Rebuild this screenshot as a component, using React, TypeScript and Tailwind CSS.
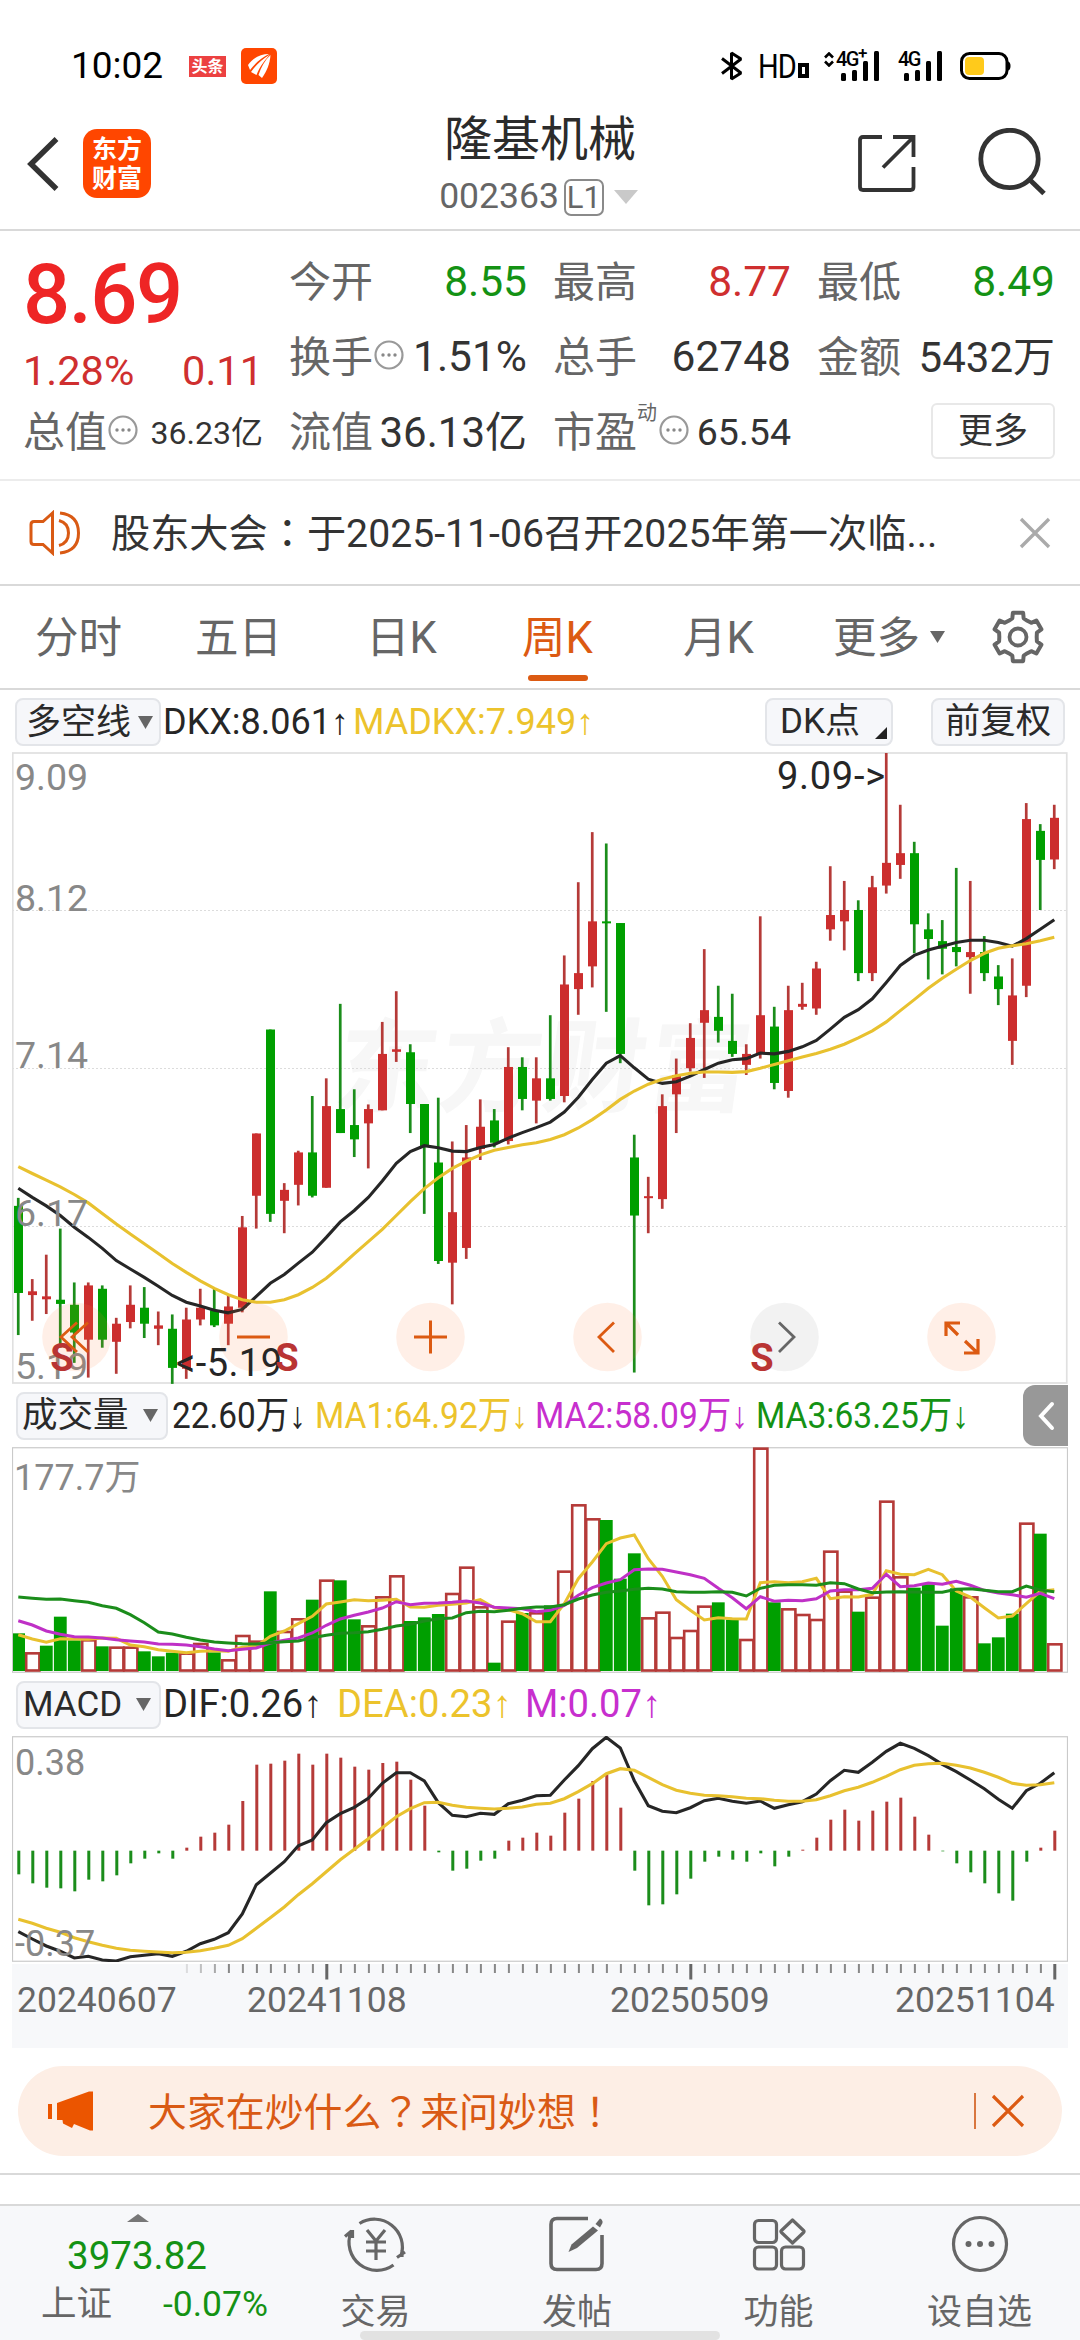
import React from "react";

/* ------------------------------------------------------------------ */
/* Chart data. Every series has 75 weekly points, 14px apart.          */
/* ------------------------------------------------------------------ */

const STEP = 14;
const cx = (i: number) => 6.3 + i * STEP;

// kind, high, bodyTop, bodyBottom, low
type Candle = [string, number, number, number, number];
const candles: Candle[] = [
  ["G", 1088, 1107, 1314, 1414], ["R", 1281, 1310, 1319, 1380], ["R", 1223, 1322, 1329, 1364],
  ["G", 1161, 1330, 1340, 1444], ["G", 1289, 1342, 1408, 1480], ["R", 1289, 1296, 1425, 1515],
  ["G", 1296, 1304, 1425, 1444], ["R", 1373, 1387, 1430, 1506], ["R", 1296, 1342, 1383, 1398],
  ["G", 1300, 1349, 1387, 1421], ["R", 1358, 1391, 1399, 1438], ["G", 1365, 1399, 1492, 1530],
  ["R", 1349, 1377, 1494, 1518], ["R", 1304, 1349, 1377, 1391], ["G", 1304, 1355, 1391, 1395],
  ["R", 1320, 1346, 1387, 1438], ["R", 1131, 1158, 1349, 1360], ["R", 935, 935, 1083, 1161],
  ["G", 688, 688, 1126, 1145], ["R", 1053, 1069, 1095, 1172], ["R", 976, 980, 1057, 1106],
  ["G", 846, 980, 1083, 1087], ["R", 804, 870, 1064, 1064], ["G", 627, 877, 934, 934],
  ["G", 830, 915, 949, 991], ["R", 866, 877, 911, 1018], ["R", 670, 746, 880, 880],
  ["R", 597, 735, 741, 765], ["G", 723, 742, 865, 934], ["G", 865, 865, 965, 1126],
  ["G", 850, 1004, 1238, 1245], ["R", 954, 1122, 1242, 1341], ["R", 915, 992, 1207, 1233],
  ["R", 854, 919, 972, 998], ["G", 877, 904, 957, 968], ["R", 730, 777, 953, 961],
  ["G", 754, 777, 853, 880], ["R", 754, 804, 857, 911], ["G", 654, 804, 853, 857],
  ["R", 512, 581, 846, 861], ["R", 338, 554, 592, 653], ["R", 219, 431, 538, 588],
  ["G", 246, 431, 434, 646], ["G", 435, 435, 746, 768], ["G", 938, 992, 1130, 1503],
  ["R", 1038, 1084, 1087, 1172], ["R", 842, 870, 1091, 1114], ["R", 757, 796, 842, 934],
  ["R", 673, 708, 780, 788], ["R", 497, 642, 672, 803], ["G", 584, 658, 691, 719],
  ["G", 603, 715, 746, 753], ["R", 723, 746, 772, 796], ["R", 419, 654, 745, 757],
  ["G", 634, 681, 815, 830], ["R", 584, 642, 834, 850], ["R", 577, 627, 634, 641],
  ["R", 527, 543, 638, 653], ["R", 300, 416, 450, 477], ["R", 335, 404, 431, 500],
  ["G", 381, 404, 554, 573], ["R", 323, 350, 554, 573], ["R", 31, 292, 346, 365],
  ["R", 154, 269, 297, 330], ["G", 242, 269, 438, 507], ["G", 412, 450, 473, 569],
  ["G", 428, 478, 496, 557], ["G", 304, 492, 504, 538], ["R", 335, 504, 516, 603],
  ["G", 466, 504, 554, 573], ["G", 535, 562, 592, 630], ["R", 519, 607, 715, 772],
  ["R", 150, 188, 584, 611], ["G", 200, 216, 285, 404], ["R", 154, 185, 284, 307],
];

const dkx = [
  1065, 1087, 1107, 1130, 1158, 1182, 1208, 1237, 1257, 1277, 1298, 1320, 1336, 1345, 1355, 1361, 1353, 1322, 1291,
  1270, 1243, 1217, 1182, 1145, 1118, 1087, 1048, 1006, 978, 964, 969, 977, 978, 968, 961, 946, 933, 921, 908, 884,
  849, 807, 768, 750, 779, 806, 816, 812, 799, 783, 768, 760, 757, 744, 746, 740, 729, 714, 687, 659, 641, 615, 576,
  536, 512, 499, 490, 481, 476, 476, 481, 490, 472, 450, 427,
];
const madkx = [
  1014, 1030, 1046, 1062, 1080, 1100, 1125, 1150, 1174, 1197, 1220, 1244, 1265, 1285, 1303, 1318, 1330, 1336, 1336,
  1330, 1318, 1301, 1279, 1251, 1221, 1192, 1163, 1130, 1097, 1066, 1040, 1018, 1001, 986, 975, 968, 962, 957, 949,
  938, 922, 902, 879, 854, 834, 818, 806, 798, 792, 789, 789, 790, 788, 780, 771, 762, 753, 745, 735, 723, 708, 691,
  670, 643, 617, 590, 566, 545, 524, 507, 495, 489, 484, 477, 469,
];

const volTops = [
  729, 786, 766, 679, 750, 747, 768, 769, 769, 783, 798, 787, 787, 758, 786, 807, 734, 751, 603, 722, 684, 628, 568,
  570, 687, 705, 618, 555, 692, 681, 671, 608, 529, 648, 817, 691, 668, 666, 645, 541, 342, 384, 389, 565, 489, 681,
  664, 740, 719, 646, 636, 688, 746, 172, 636, 654, 671, 686, 481, 601, 664, 619, 331, 558, 592, 582, 706, 594, 618,
  759, 741, 670, 397, 430, 759,
];
const volKinds = "GRGGGRGRRGGGRRGRRRGRRGRGGRRRGGGRRRGRGRGRRRGGGRRRRRGGRRGRRRRRGRRRGGGGRGGGRGR";
const ma1 = [
  733, 746, 756, 745, 746, 747, 743, 744, 764, 769, 778, 783, 787, 783, 781, 783, 771, 768, 738, 722, 700, 678, 641,
  635, 628, 631, 630, 627, 650, 651, 645, 642, 638, 628, 652, 658, 670, 694, 694, 640, 565, 515, 460, 443, 434, 505,
  558, 628, 660, 689, 682, 685, 686, 577, 574, 577, 574, 564, 625, 619, 620, 612, 541, 552, 553, 537, 553, 602, 620,
  652, 683, 677, 640, 603, 598,
];
const ma2 = [
  691, 704, 722, 732, 739, 740, 743, 748, 752, 755, 761, 762, 764, 769, 776, 781, 777, 773, 758, 750, 743, 728, 705,
  686, 675, 665, 653, 634, 643, 639, 638, 636, 632, 638, 651, 653, 655, 664, 660, 645, 615, 592, 578, 568, 538, 536,
  537, 545, 553, 564, 594, 622, 655, 619, 633, 630, 631, 625, 602, 598, 598, 594, 552, 589, 586, 578, 582, 573, 585,
  600, 608, 613, 621, 609, 625,
];
const ma3 = [
  620, 624, 627, 626, 631, 636, 646, 654, 673, 697, 725, 731, 741, 749, 755, 758, 760, 761, 757, 754, 752, 742, 735,
  729, 727, 724, 717, 707, 702, 692, 685, 683, 667, 663, 664, 660, 654, 650, 650, 643, 626, 614, 606, 602, 597, 594,
  596, 604, 606, 606, 604, 606, 617, 594, 585, 583, 583, 585, 577, 580, 596, 607, 605, 604, 605, 606, 606, 597, 595,
  600, 604, 604, 587, 599, 604,
];

const macdBars = [
  611, 638, 651, 653, 662, 627, 632, 614, 578, 564, 548, 564, 531, 498, 486, 462, 391, 282, 279, 270, 249, 282, 249,
  261, 288, 297, 277, 273, 327, 405, 545, 600, 594, 570, 564, 510, 501, 486, 495, 426, 384, 331, 312, 411, 600, 704,
  701, 671, 624, 573, 558, 567, 573, 548, 587, 558, 537, 501, 447, 417, 450, 420, 393, 381, 438, 492, 542, 578, 605,
  638, 668, 690, 573, 531, 480,
];
const dif = [
  783, 805, 826, 842, 862, 857, 868, 871, 858, 854, 849, 857, 842, 819, 806, 786, 730, 642, 608, 573, 525, 508, 456,
  429, 410, 383, 338, 306, 306, 331, 396, 434, 438, 428, 431, 399, 389, 375, 374, 328, 285, 234, 200, 232, 330, 405,
  422, 426, 411, 390, 383, 392, 398, 391, 413, 402, 393, 370, 330, 299, 305, 275, 242, 218, 233, 255, 281, 303, 328,
  354, 386, 413, 360, 338, 306,
];
const dea = [
  746, 758, 773, 785, 801, 813, 824, 833, 839, 842, 844, 846, 845, 840, 833, 824, 804, 773, 741, 709, 672, 639, 603,
  567, 536, 504, 471, 438, 414, 396, 395, 404, 410, 413, 415, 413, 409, 401, 398, 384, 363, 339, 309, 294, 299, 320,
  342, 359, 368, 374, 375, 378, 383, 384, 389, 392, 392, 387, 375, 360, 350, 335, 317, 297, 284, 279, 278, 284, 292,
  305, 320, 338, 344, 342, 336,
];

const yPrice = (v: number) => (v - 31) / 2.376 + 1;
const yVol = (v: number) => (v - 173) / 3 + 1;
const yMacd = (v: number) => (v - 199) / 3 + 1;
const line = (vals: number[], y: (v: number) => number) =>
  vals.map((v, i) => `${cx(i).toFixed(1)},${y(v).toFixed(1)}`).join(" ");

const RED = "#cc2e2e";
const RED_THIN = "#b53a38";
const GREEN = "#009f00";
const GREEN_THIN = "#1b8d1b";
const BLACK = "#262626";
const YELLOW = "#e8c12f";
const PURPLE = "#bf30c6";

/* ------------------------------------------------------------------ */
/* Small pieces                                                        */
/* ------------------------------------------------------------------ */

function Signal({ heights }: { heights: number[] }) {
  return (
    <svg width="40" height="32" viewBox="0 0 40 32">
      {heights.map((h, i) => (
        <rect key={i} x={i * 11} y={31 - h} width="5" height={h} rx="1.5" fill="#000" />
      ))}
    </svg>
  );
}

function StatusBar() {
  return (
    <div className="flex h-[88px] items-start pl-[71px] text-black">
      <div className="mt-[46px] w-[118px] whitespace-nowrap text-[37px] leading-[40px]">10:02</div>
      <div className="mt-[56px] flex h-[21px] w-[37px] items-center justify-center bg-[#ec4141] font-bold">
        <span className="text-[16px] leading-none text-white">头条</span>
      </div>
      <div className="ml-[15px] mt-[48px] flex h-[36px] w-[36px] items-center justify-center rounded-[5px] bg-[#ff4600]">
        <svg width="26" height="26" viewBox="0 0 26 26" fill="#fff">
          <path d="M2 12C7 5 14 1 23 1C17 4 10 9 4 17Z" />
          <path d="M5 19C10 12 16 6 24 1.5C19 7 14 13 10.500 22Z" />
          <path d="M12.500 22C15 14 19 7 24.500 2C24 10 21 18 16 25Z" />
        </svg>
      </div>
      <svg className="ml-[444px] mt-[51px]" width="22" height="30" viewBox="0 0 22 30" fill="none" stroke="#000" strokeWidth="3" strokeLinejoin="bevel">
        <path d="M1 7.500L20 22L10.500 28V2L20 8L1 22.500" />
      </svg>
      <div className="ml-[15px] mt-[50px] w-[40px] origin-left scale-x-[0.88] text-[33px] leading-[33px] tracking-[-1px]">HD</div>
      <div className="mt-[63px] h-[15px] w-[11px] border-4 border-black" />
      <svg className="ml-[15px] mt-[52px]" width="10" height="15" viewBox="0 0 10 15" fill="none" stroke="#000" strokeWidth="2.600">
        <path d="M1 5.500L5 1.500L9 5.500M1 9.500L5 13.500L9 9.500" />
      </svg>
      <div className="relative ml-[7px] mt-[50px] h-[32px] w-[40px]">
        <Signal heights={[8, 11, 20, 30]} />
        <span className="absolute left-[-5px] top-0 text-[20px] font-medium leading-[18px] tracking-[-1.500px]">4G</span>
        <span className="absolute left-[17px] top-[-6px] text-[17px] font-medium leading-[18px]">+</span>
      </div>
      <div className="relative ml-[23px] mt-[50px] h-[32px] w-[40px]">
        <Signal heights={[8, 11, 20, 30]} />
        <span className="absolute left-[-6px] top-0 text-[20px] font-medium leading-[18px] tracking-[-1.500px]">4G</span>
      </div>
      <svg className="ml-[16px] mt-[51px]" width="51" height="30" viewBox="0 0 51 30">
        <rect x="1.500" y="2.500" width="45.500" height="25" rx="8" fill="#fff" stroke="#000" strokeWidth="3" />
        <rect x="5" y="6" width="19" height="18" rx="4" fill="#ffca1b" />
        <path d="M48 10.500Q50.500 11 50.500 15T48 19.500Z" fill="#000" />
      </svg>
    </div>
  );
}

function Header() {
  return (
    <header className="flex h-[143px] items-start border-b-2 border-[#d9d9d9]">
      <svg className="ml-[26px] mt-[49px]" width="34" height="54" viewBox="0 0 34 54" fill="none" stroke="#333" strokeWidth="5.500">
        <path d="M30.500 2L5 27L30.500 52" />
      </svg>
      <div className="ml-[23px] mt-[41px] flex h-[69px] w-[68px] flex-col items-center justify-center rounded-[14px] bg-[#ff4600] text-[25px] font-bold leading-[29px] text-white">
        <span>东方</span>
        <span>财富</span>
      </div>
      <div className="ml-[281px] flex w-[216px] flex-col items-center">
        <h1 className="mt-[24px] whitespace-nowrap text-[48px] leading-[56px] text-[#2b2b2b]">隆基机械</h1>
        <div className="mr-[3px] mt-[8px] flex h-[42px] items-center text-[#666]">
          <span className="text-[35.500px] leading-none">002363</span>
          <span className="ml-[5px] flex h-[37px] w-[40px] items-center justify-center rounded-[7px] border-2 border-[#8a8a8a] text-[31px] leading-none">
            L1
          </span>
          <svg className="ml-[10px]" width="24" height="14" viewBox="0 0 24 14">
            <path d="M0 0H24L12 14Z" fill="#c9c9c9" />
          </svg>
        </div>
      </div>
      <svg className="ml-[210px] mt-[47px]" width="59" height="58" viewBox="0 0 59 58" fill="none" stroke="#333" strokeWidth="3.800">
        <path d="M24 2H5Q2 2 2 5V52Q2 55 5 55H52.500Q55.500 55 55.500 52V32" />
        <path d="M35 2H55.500V22M55 2.500L25 32.500" />
      </svg>
      <svg className="ml-[60px] mt-[40px]" width="70" height="72" viewBox="0 0 70 72" fill="none" stroke="#333" strokeWidth="4.800">
        <circle cx="32.500" cy="31" r="28.700" />
        <path d="M53 52L67 65.500" strokeWidth="5" />
      </svg>
    </header>
  );
}

function Dots() {
  return (
    <svg width="30" height="30" viewBox="0 0 30 30" fill="none">
      <circle cx="15" cy="15" r="13.500" stroke="#999" strokeWidth="2.200" />
      <circle cx="9" cy="15" r="1.700" fill="#888" />
      <circle cx="15" cy="15" r="1.700" fill="#888" />
      <circle cx="21" cy="15" r="1.700" fill="#888" />
    </svg>
  );
}

function Cell({ label, value, color = "text-[#333]", dots = false, sup, size = "text-[42.500px]" }: {
  label: string; value: string; color?: string; dots?: boolean; sup?: string; size?: string;
}) {
  return (
    <div className="flex h-[75px] items-center whitespace-nowrap leading-none">
      <span className="relative text-[42px] text-[#666]">
        {label}
        {sup && <span className="absolute left-[84px] top-[-9px] text-[20px] leading-none">{sup}</span>}
      </span>
      {dots && <span className={sup ? "ml-[22px] pb-[6px]" : "ml-px pb-[6px]"}><Dots /></span>}
      <span className={`ml-auto ${size} ${color}`}>{value}</span>
    </div>
  );
}

function Quote() {
  return (
    <section className="grid h-[250px] grid-cols-[240px_238px_238px_238px] gap-x-[26px] border-b-2 border-[#ececec] pl-[23px] pt-[14px]">
      <div className="flex flex-col">
        <div className="mt-[8px] h-[84px] whitespace-nowrap text-[83px] font-medium leading-[84px] tracking-[-1.500px] text-[#ee2525]">8.69</div>
        <div className="mt-[10px] flex h-[48px] items-center justify-between text-[41.500px] leading-none text-[#cf2f2f]">
          <span>1.28%</span>
          <span>0.11</span>
        </div>
        <Cell label="总值" value="36.23亿" dots size="text-[32px]" />
      </div>
      <div>
        <Cell label="今开" value="8.55" color="text-[#149214]" />
        <Cell label="换手" value="1.51%" dots />
        <Cell label="流值" value="36.13亿" size="text-[42px]" />
      </div>
      <div>
        <Cell label="最高" value="8.77" color="text-[#cf2f2f]" />
        <Cell label="总手" value="62748" />
        <Cell label="市盈" value="65.54" sup="动" dots size="text-[37.500px]" />
      </div>
      <div>
        <Cell label="最低" value="8.49" color="text-[#149214]" />
        <Cell label="金额" value="5432万" size="text-[42px]" />
        <button className="ml-auto mt-[8px] flex h-[56px] w-[124px] items-center justify-center rounded-[6px] border-2 border-[#e8e8e8] text-[35px] leading-none text-[#333]">
          更多
        </button>
      </div>
    </section>
  );
}

function News() {
  return (
    <section className="flex h-[105px] items-center border-b-2 border-[#d9d9d9] pl-[29px]">
      <svg width="52" height="46" viewBox="0 0 52 46" fill="none" stroke="#d95a14" strokeWidth="3">
        <path d="M23.500 3L14 11.500H5Q2 11.500 2 14.500V31.500Q2 34.500 5 34.500H14L23.500 43Z" />
        <path d="M30 10.500Q39.500 13 39.500 23T30 35.500" />
        <path d="M31 3Q49.500 5 49.500 23T31 43" />
      </svg>
      <div className="ml-[30px] w-[831px] whitespace-nowrap text-[39.200px] leading-none text-[#333]">
        股东大会<span className='font-["Noto_Sans_CJK_TC"]' lang="zh-TW">：</span>于2025-11-06召开2025年第一次临...
      </div>
      <svg className="ml-[77px]" width="32" height="32" viewBox="0 0 32 32" stroke="#aaa" strokeWidth="3.400">
        <path d="M2 2L30 30M30 2L2 30" />
      </svg>
    </section>
  );
}

const gearPath = (() => {
  const pts: string[] = [];
  for (let k = 0; k < 6; k++) {
    const a = -90 + k * 60;
    const steps: [number, number][] = [[-17, 18.500], [-12, 23.500], [12, 23.500], [17, 18.500], [30, 17.800]];
    for (const [d, r] of steps) {
      const t = ((a + d) * Math.PI) / 180;
      pts.push(`${(27 + r * Math.cos(t)).toFixed(1)} ${(27 + r * Math.sin(t)).toFixed(1)}`);
    }
  }
  return `M${pts.join("L")}Z`;
})();

function Tabs() {
  const base = "whitespace-nowrap pt-[4px] text-[43.500px] leading-none";
  return (
    <nav className="flex h-[104px] items-center border-b-2 border-[#d9d9d9] text-[#666]">
      <span className={`${base} ml-[35px] w-[160px]`}>分时</span>
      <span className={`${base} w-[171px]`}>五日</span>
      <span className={`${base} w-[156px]`}>日K</span>
      <span className={`${base} relative w-[161px] text-[#dc5a12]`}>
        周K
        <i className="absolute left-[6px] top-[62px] h-[6px] w-[60px] rounded-full bg-[#dc5a12]" />
      </span>
      <span className={`${base} w-[150px]`}>月K</span>
      <span className={`${base} w-[97px]`}>更多</span>
      <svg width="15" height="12" viewBox="0 0 15 12"><path d="M0 0H15L7.500 12Z" fill="#666" /></svg>
      <svg className="ml-[46px]" width="54" height="54" viewBox="0 0 54 54" fill="none" stroke="#666" strokeWidth="3.800" strokeLinejoin="round">
        <path d={gearPath} transform="translate(-1.350 -1.350) scale(1.050)" />
        <circle cx="27" cy="27" r="8.500" />
      </svg>
    </nav>
  );
}

const pill = "flex shrink-0 items-center rounded-[8px] border-2 border-[#e3e5e9] bg-[#f6f7fa] leading-none text-[#2a2a2a] whitespace-nowrap";

function Down() {
  return <svg width="15" height="13" viewBox="0 0 15 13"><path d="M0 0H15L7.500 13Z" fill="#666" /></svg>;
}

function PriceChart() {
  const buttons = [76, 253, 430, 607, 784, 961].map((x) => x - 12);
  return (
    <svg className="ml-[12px] block" width="1056" height="632" viewBox="0 0 1056 632">
      <text x="316" y="352" fontSize="102" fontWeight="700" fill="#f7f7f7" textLength="414" transform="translate(53 0) skewX(-8)">东方财富</text>
      {[910.5, 1068.5, 1226.5].map((y) => (
        <line key={y} x1="0" x2="1055" y1={y - 752} y2={y - 752} stroke="#dcdcdc" strokeDasharray="2 2" />
      ))}
      <rect x="0.750" y="1" width="1054" height="630" fill="none" stroke="#e0e0e0" strokeWidth="1.700" />
      {candles.map(([k, hi, top, bot, lo], i) => {
        const x = cx(i);
        return (
          <g key={i}>
            <rect x={x - 1.4} y={yPrice(hi)} width="2.700" height={yPrice(lo) - yPrice(hi)} fill={k === "G" ? GREEN_THIN : RED_THIN} />
            <rect x={x - 4.3} y={yPrice(top)} width="9" height={Math.max(2, yPrice(bot) - yPrice(top))} fill={k === "G" ? GREEN : RED} />
          </g>
        );
      })}
      <polyline points={line(dkx, yPrice)} fill="none" stroke={BLACK} strokeWidth="3.100" />
      <polyline points={line(madkx, yPrice)} fill="none" stroke={YELLOW} strokeWidth="3.100" />
      <g fontSize="37.500" fill="#888">
        <text x="3" y="38">9.09</text>
        <text x="3" y="158.500">8.12</text>
        <text x="3" y="316">7.14</text>
        <text x="3" y="473.500">6.17</text>
        <text x="3" y="627">5.19</text>
      </g>
      {buttons.map((x, i) => (
        <circle key={x} cx={x + 0.500} cy="585" r="34.300" fill={i === 4 ? "#8a8a8a" : "#ff7a3d"} fillOpacity={i === 4 ? 0.11 : 0.12} />
      ))}
      <g fontSize="38" fill={BLACK}>
        <text x="765" y="36.500" textLength="108">9.09-&gt;</text>
        <text x="164" y="624" textLength="106">&lt;-5.19</text>
      </g>
      <g fontSize="38" fontWeight="700" fill="#b93433" textAnchor="middle">
        <text x="50" y="619">S</text>
        <text x="275" y="619">S</text>
        <text x="750" y="619">S</text>
      </g>
      <g fill="none" stroke="#dc5a12" strokeWidth="2.800">
        <path d="M65 570.500L49 585L65 600M76 570.500L60 585L76 600" />
        <path d="M225 585H258" />
        <path d="M402 585H435M418.500 568.500V601.500" strokeWidth="3" />
        <path d="M602 570.500L587 585L602 600" />
        <path d="M934 584V571H948M934.500 571.500L946 583M952 601H966V587M953 589L965 600.500" strokeWidth="3.200" />
      </g>
      <path d="M767 570.500L782 585L767 600" fill="none" stroke="#666" strokeWidth="2.800" />
    </svg>
  );
}

function VolumeChart() {
  return (
    <svg className="ml-[12px] block" width="1056" height="226" viewBox="0 0 1056 226">
      <rect x="0.500" y="0.750" width="1055" height="224.500" fill="none" stroke="#cacaca" strokeWidth="1.200" />
      {volTops.map((v, i) => {
        const x = cx(i);
        const y = yVol(v);
        return volKinds[i] === "G" ? (
          <rect key={i} x={i === 0 ? 1 : x - 6.4} y={y} width={i === 0 ? 12 : 12.800} height={224 - y} fill={GREEN} />
        ) : (
          <rect key={i} x={x - 6.1} y={y + 1} width="13.200" height={222.500 - y} fill="#fff" stroke={RED_THIN} strokeWidth="2.600" />
        );
      })}
      <g fill="none" strokeWidth="3">
        <polyline points={line(ma1, yVol)} stroke={YELLOW} />
        <polyline points={line(ma2, yVol)} stroke={PURPLE} />
        <polyline points={line(ma3, yVol)} stroke={GREEN_THIN} />
      </g>
      <text x="2" y="43" fontSize="36" fill="#888">177.7万</text>
    </svg>
  );
}

function MacdChart() {
  return (
    <svg className="ml-[12px] block" width="1056" height="226" viewBox="0 0 1056 226">
      <rect x="0.500" y="0.750" width="1055" height="224.500" fill="none" stroke="#cacaca" strokeWidth="1.200" />
      {macdBars.map((v, i) => (
        <rect key={i} x={cx(i) - 1} y={yMacd(Math.min(v, 540))} width="3" height={Math.abs(v - 540) / 3} fill={v < 540 ? RED_THIN : GREEN_THIN} />
      ))}
      <g fill="none" strokeWidth="3.100">
        <polyline points={line(dif, yMacd)} stroke={BLACK} />
        <polyline points={line(dea, yMacd)} stroke={YELLOW} />
      </g>
      <g fontSize="36" fill="#888">
        <text x="3" y="39">0.38</text>
        <text x="3" y="220">-0.37</text>
      </g>
    </svg>
  );
}

function Axis() {
  const ticks = Array.from({ length: 63 }, (_, k) => k + 12);
  return (
    <div className="ml-[12px] mt-[2px] h-[84px] w-[1056px] bg-[#f7f8fa]">
      <svg className="block" width="1056" height="16" viewBox="0 0 1056 16">
        {ticks.map((i) => {
          const major = i === 22 || i === 48 || i === 74;
          return (
            <rect key={i} x={cx(i) - (major ? 1 : 0.4)} y="0" width={major ? 3 : 2} height={major ? 15.500 : 9}
              fill={major ? "#666" : "#888"} opacity={i === 12 ? 0.25 : i === 13 ? 0.5 : i === 14 ? 0.7 : 1} />
          );
        })}
      </svg>
      <div className="flex pt-px text-[35.500px] leading-[38px] text-[#666]">
        <span className="ml-[5px] w-[230px]">20240607</span>
        <span className="w-[363px]">20241108</span>
        <span className="w-[285px]">20250509</span>
        <span>20251104</span>
      </div>
    </div>
  );
}

function Banner() {
  return (
    <div className="mt-[18px] ml-[18px] flex h-[90px] w-[1044px] items-center rounded-full bg-[#fdeee5] text-[#d95a14]">
      <svg className="ml-[29px]" width="48" height="42" viewBox="0 0 48 42" fill="#eb5500">
        <rect x="1" y="14" width="4" height="15" />
        <path d="M10 13L42 1.500H46V40.500H43L27 34L25 38L16 33.500L15.500 30H10Z" />
      </svg>
      <span className="ml-[53px] w-[826px] whitespace-nowrap text-[38.900px] leading-none">
        大家在炒什么<span className='font-["Noto_Sans_CJK_TC"]' lang="zh-TW">？</span>来问妙想<span className='font-["Noto_Sans_CJK_TC"]' lang="zh-TW">！</span>
      </span>
      <span className="h-[36px] w-[2px] bg-[#d9763f]" />
      <svg className="ml-[15px]" width="34" height="34" viewBox="0 0 34 34" stroke="#dc5a12" strokeWidth="3.200">
        <path d="M2 2L32 32M32 2L2 32" />
      </svg>
    </div>
  );
}

function NavItem({ label, children, width }: { label: string; children: React.ReactNode; width: string }) {
  return (
    <div className={`flex flex-col items-center ${width}`}>
      <svg className="mt-[5px]" width="66" height="66" viewBox="0 0 66 66" fill="none" stroke="#666" strokeWidth="3.200">
        {children}
      </svg>
      <span className="mt-[17px] whitespace-nowrap text-[35px] leading-[38px] text-[#666]">{label}</span>
    </div>
  );
}

function BottomBar() {
  return (
    <footer className="relative flex h-[136px] border-t-2 border-[#d9d9d9] bg-[#f7f8fa]">
      <div className="w-[275px]">
        <svg className="ml-[127px] mt-[8px]" width="22" height="8" viewBox="0 0 22 8"><path d="M0 8L11 0L22 8Z" fill="#777" /></svg>
        <div className="ml-[67px] mt-[13px] text-[38.500px] leading-[42px] text-[#149214]">3973.82</div>
        <div className="ml-[41px] mt-[6px] flex h-[44px] w-[227px] items-center justify-between text-[35.500px] leading-none">
          <span className="text-[#666]">上证</span>
          <span className="text-[#149214]">-0.07%</span>
        </div>
      </div>
      <NavItem label="交易" width="w-[201px]">
        <path d="M16.500 12.500A28 28 0 0 1 58 45M59 46V39M54 46.500L62 41" />
        <path d="M50.500 54A28 28 0 0 1 8 21M8.500 20L2 25.500M9.500 19V27" />
        <path d="M24 19L33 30L42 19M33 30V49M23 31H43M23 40H43" />
      </NavItem>
      <NavItem label="发帖" width="w-[202px]">
        <path d="M44 7.500H13Q7 7.500 7 13.500V52.500Q7 58.500 13 58.500H52Q58 58.500 58 52.500V24" strokeWidth="3.600" />
        <path d="M49 15.500L54 19.500L33 37L24.500 41L27.500 33.500Z" fill="#666" stroke="none" />
        <path d="M51.500 13L56 7.500Q59 9 58.500 12L56 16.500Z" fill="#666" stroke="none" />
      </NavItem>
      <NavItem label="功能" width="w-[201px]">
        <rect x="8.500" y="9.500" width="22" height="22" rx="4" />
        <path d="M46.500 9L57.500 19.500Q58.500 20.500 57.500 21.500L46.500 32L35.500 21.500Q34.500 20.500 35.500 19.500Z" strokeLinejoin="round" />
        <rect x="8.500" y="36" width="22" height="22" rx="4" />
        <rect x="35.500" y="36" width="22" height="22" rx="4" />
      </NavItem>
      <NavItem label="设自选" width="w-[201px]">
        <circle cx="33" cy="33" r="26.500" />
        <g fill="#666" stroke="none">
          <circle cx="21.500" cy="33" r="3" />
          <circle cx="33" cy="33" r="3" />
          <circle cx="44.500" cy="33" r="3" />
        </g>
      </NavItem>
      <i className="absolute bottom-0 left-[360px] h-[9px] w-[360px] rounded-[5px] bg-[#e2e2e2]" />
    </footer>
  );
}

export default function App() {
  return (
    <div className='h-[2340px] w-[1080px] overflow-hidden bg-white font-[Roboto,"Liberation_Sans","Noto_Sans_CJK_SC",sans-serif]' lang="zh-CN">
      <StatusBar />
      <Header />
      <Quote />
      <News />
      <Tabs />

      <div className="flex h-[62px] items-center pl-[15px] pt-[2px] text-[36px] leading-none">
        <span className={`${pill} h-[48px] w-[146px] justify-between pl-[9px] pr-[6px] text-[35px]`}>多空线<Down /></span>
        <span className="ml-[2px] w-[190px] whitespace-nowrap text-[#262626]">DKX:8.061↑</span>
        <span className="whitespace-nowrap text-[#ecc32c]">MADKX:7.949↑</span>
        <span className={`${pill} ml-auto h-[48px] w-[128px] items-end justify-between pb-[5px] pl-[13px] pr-[4px] text-[35px]`}>
          DK点
          <svg width="12" height="12" viewBox="0 0 12 12"><path d="M12 0V12H0Z" fill="#222" /></svg>
        </span>
        <span className={`${pill} ml-[38px] mr-[15px] h-[48px] w-[134px] justify-center text-[35.500px]`}>前复权</span>
      </div>
      <PriceChart />

      <div className="flex h-[63px] items-center pl-[16px] text-[37.500px] leading-none">
        <span className={`${pill} h-[48px] w-[152px] justify-between pl-[4px] pr-[8px] text-[35.500px]`}>成交量<Down /></span>
        <span className="w-[144px] whitespace-nowrap text-[#262626]"><span className="ml-[4px] inline-block origin-left scale-x-[0.89]">22.60万↓</span></span>
        <span className="ml-[3px] w-[220px] whitespace-nowrap text-[#ecc32c]"><span className="inline-block origin-left scale-x-[0.895]">MA1:64.92万↓</span></span>
        <span className="w-[221px] whitespace-nowrap text-[#c72fce]"><span className="inline-block origin-left scale-x-[0.895]">MA2:58.09万↓</span></span>
        <span className="w-[220px] whitespace-nowrap text-[#149214]"><span className="inline-block origin-left scale-x-[0.895]">MA3:63.25万↓</span></span>
        <span className="ml-auto mr-[12px] flex h-[61px] w-[45px] items-center justify-center rounded-l-[12px] bg-[#989898]">
          <svg width="18" height="30" viewBox="0 0 18 30" fill="none" stroke="#fff" strokeWidth="4" strokeLinecap="round"><path d="M15 3L4 15L15 27" /></svg>
        </span>
      </div>
      <VolumeChart />

      <div className="flex h-[63px] items-center pl-[16px] text-[38.200px] leading-none">
        <span className={`${pill} h-[48px] w-[145px] justify-between pl-[5px] pr-[8px] text-[35px]`}>MACD<Down /></span>
        <span className="ml-[2px] w-[174px] whitespace-nowrap text-[#262626]">DIF:0.26↑</span>
        <span className="w-[188px] whitespace-nowrap text-[#ecc32c]">DEA:0.23↑</span>
        <span className="whitespace-nowrap text-[#c72fce]">M:0.07↑</span>
      </div>
      <MacdChart />
      <Axis />
      <Banner />
      <div className="mt-[17px] h-[31px] border-t-2 border-[#d9d9d9]" />
      <BottomBar />
    </div>
  );
}
